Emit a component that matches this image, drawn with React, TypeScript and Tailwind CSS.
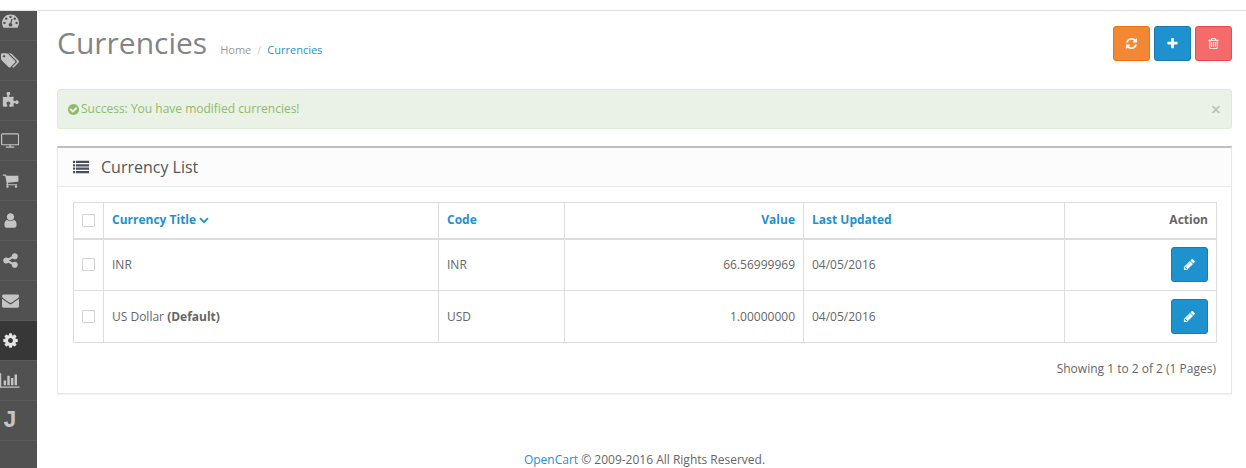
import type { ReactNode } from "react";

const ICONS = {
  dashboard:
    "M384 1152q0-53-37.5-90.5t-90.5-37.5-90.5 37.5-37.5 90.5 37.5 90.5 90.5 37.5 90.5-37.5 37.5-90.5zm192-448q0-53-37.5-90.5t-90.5-37.5-90.5 37.5-37.5 90.5 37.5 90.5 90.5 37.5 90.5-37.5 37.5-90.5zm428 481l101-382q6-26-7.5-48.5t-38.5-29.5-48 6.5-30 39.5l-101 382q-60 5-107 43.5t-63 98.5q-20 77 20 146t117 89 146-20 89-117q16-60-6-117t-72-91zm660-33q0-53-37.5-90.5t-90.5-37.5-90.5 37.5-37.5 90.5 37.5 90.5 90.5 37.5 90.5-37.5 37.5-90.5zm-640-640q0-53-37.5-90.5t-90.5-37.5-90.5 37.5-37.5 90.5 37.5 90.5 90.5 37.5 90.5-37.5 37.5-90.5zm448 192q0-53-37.5-90.5t-90.5-37.5-90.5 37.5-37.5 90.5 37.5 90.5 90.5 37.5 90.5-37.5 37.5-90.5zm320 448q0 261-141 483-19 29-54 29h-1402q-35 0-54-29-141-221-141-483 0-182 71-348t191-286 286-191 348-71 348 71 286 191 191 286 71 348z",
  tags: "M448 448q0-53-37.5-90.5t-90.5-37.5-90.5 37.5-37.5 90.5 37.5 90.5 90.5 37.5 90.5-37.5 37.5-90.5zm1067 576q0 53-37 90l-491 492q-39 37-91 37-53 0-90-37l-715-716q-38-37-64.5-101t-26.5-117v-416q0-52 38-90t90-38h416q53 0 117 26.5t102 64.5l715 714q37 39 37 91zm384 0q0 53-37 90l-491 492q-39 37-91 37-36 0-59-14t-53-45l470-470q37-37 37-90 0-52-37-91l-715-714q-38-38-102-64.5t-117-26.5h224q53 0 117 26.5t102 64.5l715 714q37 39 37 91z",
  puzzle:
    "M1755 1083q0 81-44.5 135t-123.5 54q-41 0-77.5-17.5t-59-38-56.5-38-71-17.5q-110 0-110 124 0 39 16 115t15 115v5q-22 0-33 1-34 3-97.5 11.5t-115.5 13.5-98 5q-61 0-103-26.5t-42-83.5q0-37 17.5-71t38-56.5 38-59 17.5-77.5q0-79-54-123.5t-135-44.5q-84 0-143 45.5t-59 127.5q0 43 15 83t33.5 64.5 33.5 53 15 50.5q0 45-46 89-37 35-117 35-95 0-245-24-9-2-27.5-4t-27.5-4l-13-2q-1 0-3-1-2 0-2-1v-1024q2 1 17.5 3.5t34 5 21.5 3.5q150 24 245 24 80 0 117-35 46-44 46-89 0-22-15-50.5t-33.5-53-33.5-64.5-15-83q0-82 59-127.5t144-45.5q80 0 134 44.5t54 123.5q0 41-17.5 77.5t-38 59-38 56.5-17.5 71q0 57 42 83.5t103 26.5q64 0 180-15t163-17v2q-1 2-3.5 17.5t-5 34-3.5 21.5q-24 150-24 245 0 80 35 117 44 46 89 46 22 0 50.5-15t53-33.5 64.5-33.5 83-15q82 0 127.5 59t45.5 143z",
  television:
    "M1792 1248v-960q0-13-9.5-22.5t-22.5-9.5h-1600q-13 0-22.5 9.5t-9.5 22.5v960q0 13 9.5 22.5t22.5 9.5h1600q13 0 22.5-9.5t9.5-22.5zm128-960v960q0 66-47 113t-113 47h-736v128h352q14 0 23 9t9 23v64q0 14-9 23t-23 9h-832q-14 0-23-9t-9-23v-64q0-14 9-23t23-9h352v-128h-736q-66 0-113-47t-47-113v-960q0-66 47-113t113-47h1600q66 0 113 47t47 113z",
  cart: "M704 1536q0 52-38 90t-90 38-90-38-38-90 38-90 90-38 90 38 38 90zm896 0q0 52-38 90t-90 38-90-38-38-90 38-90 90-38 90 38 38 90zm128-1088v512q0 24-16.5 42.5t-40.5 21.5l-1044 122q13 60 13 70 0 16-24 64h920q26 0 45 19t19 45-19 45-45 19h-1024q-26 0-45-19t-19-45q0-11 8-31.5t16-36 21.5-40 15.5-29.5l-177-823h-204q-26 0-45-19t-19-45 19-45 45-19h256q16 0 28.5 6.5t19.5 15.5 13 24.5 8 26 5.5 29.5 4.5 26h1201q26 0 45 19t19 45z",
  user: "M1536 1399q0 109-62.5 187t-150.5 78h-854q-88 0-150.5-78t-62.5-187q0-85 8.5-160.5t31.5-152 58.5-131 94-89 134.5-34.5q131 128 313 128t313-128q76 0 134.5 34.5t94 89 58.5 131 31.5 152 8.5 160.5zm-256-887q0 159-112.5 271.5t-271.5 112.5-271.5-112.5-112.5-271.5 112.5-271.5 271.5-112.5 271.5 112.5 112.5 271.5z",
  share:
    "M1344 1024q133 0 226.5 93.5t93.5 226.5-93.5 226.5-226.5 93.5-226.5-93.5-93.5-226.5q0-12 2-34l-360-180q-92 86-218 86-133 0-226.5-93.5t-93.5-226.5 93.5-226.5 226.5-93.5q126 0 218 86l360-180q-2-22-2-34 0-133 93.5-226.5t226.5-93.5 226.5 93.5 93.5 226.5-93.5 226.5-226.5 93.5q-126 0-218-86l-360 180q2 22 2 34t-2 34l360 180q92-86 218-86z",
  envelope:
    "M1792 710v794q0 66-47 113t-113 47h-1472q-66 0-113-47t-47-113v-794q44 49 101 87 362 246 497 345 57 42 92.5 65.5t94.5 48 110 24.5h2q51 0 110-24.5t94.5-48 92.5-65.5q170-123 498-345 57-39 100-87zm0-294q0 79-49 151t-122 123q-376 261-468 325-10 7-42.5 31t-54 38-52 32.5-57.5 27-50 9h-2q-23 0-50-9t-57.5-27-52-32.5-54-38-42.5-31q-91-64-262-182.5t-205-142.5q-62-42-117-115.5t-55-136.5q0-78 41.5-130t118.5-52h1472q65 0 112.5 47t47.5 113z",
  cog: "M1152 896q0-106-75-181t-181-75-181 75-75 181 75 181 181 75 181-75 75-181zm512-109v222q0 12-8 23t-20 13l-185 28q-19 54-39 91 35 50 107 138 10 12 10 25t-9 23q-27 37-99 108t-94 71q-12 0-26-9l-138-108q-44 23-91 38-16 136-29 186-7 28-36 28h-222q-14 0-24.5-8.5t-11.5-21.5l-28-184q-49-16-90-37l-141 107q-10 9-25 9-14 0-25-11-126-114-165-168-7-10-7-23 0-12 8-23 15-21 51-66.5t54-70.5q-27-50-41-99l-183-27q-13-2-21-12.5t-8-23.5v-222q0-12 8-23t19-13l186-28q14-46 39-92-40-57-107-138-10-12-10-24 0-10 9-23 26-36 98.5-107.5t94.5-71.5q13 0 26 10l138 107q44-23 91-38 16-136 29-186 7-28 36-28h222q14 0 24.5 8.5t11.5 21.5l28 184q49 16 90 37l142-107q9-9 24-9 13 0 25 10 129 119 165 170 7 8 7 22 0 12-8 23-15 21-51 66.5t-54 70.5q26 50 41 98l183 28q13 2 21 12.5t8 23.5z",
  chart:
    "M640 896v512h-256v-512h256zm384-512v1024h-256v-1024h256zm1024 1152v128h-2048v-1536h128v1408h1920zm-640-896v768h-256v-768h256zm384-384v1152h-256v-1152h256z",
  refresh:
    "M1639 1056q0 5-1 7-64 268-268 434.5t-478 166.5q-146 0-282.5-55t-243.5-157l-129 129q-19 19-45 19t-45-19-19-45v-448q0-26 19-45t45-19h448q26 0 45 19t19 45-19 45l-137 137q71 66 161 102t187 36q134 0 250-65t186-179q11-17 53-117 8-23 30-23h192q13 0 22.5 9.5t9.5 22.5zm25-800v448q0 26-19 45t-45 19h-448q-26 0-45-19t-19-45 19-45l138-138q-148-137-349-137-134 0-250 65t-186 179q-11 17-53 117-8 23-30 23h-199q-13 0-22.5-9.5t-9.5-22.5v-7q65-268 270-434.5t480-166.5q146 0 284 55.5t245 156.5l130-129q19-19 45-19t45 19 19 45z",
  plus: "M1600 736v192q0 40-28 68t-68 28h-416v416q0 40-28 68t-68 28h-192q-40 0-68-28t-28-68v-416h-416q-40 0-68-28t-28-68v-192q0-40 28-68t68-28h416v-416q0-40 28-68t68-28h192q40 0 68 28t28 68v416h416q40 0 68 28t28 68z",
  trash:
    "M704 736v576q0 14-9 23t-23 9h-64q-14 0-23-9t-9-23v-576q0-14 9-23t23-9h64q14 0 23 9t9 23zm256 0v576q0 14-9 23t-23 9h-64q-14 0-23-9t-9-23v-576q0-14 9-23t23-9h64q14 0 23 9t9 23zm256 0v576q0 14-9 23t-23 9h-64q-14 0-23-9t-9-23v-576q0-14 9-23t23-9h64q14 0 23 9t9 23zm128 724v-948h-896v948q0 22 7 40.5t14.5 27 10.5 8.5h832q3 0 10.5-8.5t14.5-27 7-40.5zm-672-1076h448l-48-117q-7-9-17-11h-317q-10 2-17 11zm928 32v64q0 14-9 23t-23 9h-96v948q0 83-47 143.5t-113 60.5h-832q-66 0-113-58.5t-47-141.5v-952h-96q-14 0-23-9t-9-23v-64q0-14 9-23t23-9h309l70-167q15-37 54-63t79-26h320q40 0 79 26t54 63l70 167h309q14 0 23 9t9 23z",
  check:
    "M1412 734q0-28-18-46l-91-90q-19-19-45-19t-45 19l-408 407-226-226q-19-19-45-19t-45 19l-91 90q-18 18-18 46 0 27 18 45l362 362q19 19 45 19 27 0 46-19l543-543q18-18 18-45zm252 162q0 209-103 385.5t-279.5 279.5-385.5 103-385.5-103-279.5-279.5-103-385.5 103-385.5 279.5-279.5 385.5-103 385.5 103 279.5 279.5 103 385.5z",
  pencil:
    "M491 1536l91-91-235-235-91 91v107h128v128h107zm523-928q0-22-22-22-10 0-17 7l-542 542q-7 7-7 17 0 22 22 22 10 0 17-7l542-542q7-7 7-17zm-54-192l416 416-832 832h-416v-416zm683 96q0 53-37 90l-166 166-416-416 166-165q36-38 90-38 53 0 91 38l235 234q37 39 37 91z",
  list: "M0 192h240v256h-240zM336 192h1456v256h-1456zM0 576h240v256h-240zM336 576h1456v256h-1456zM0 960h240v256h-240zM336 960h1456v256h-1456zM0 1344h240v256h-240zM336 1344h1456v256h-1456z",
};

type IconName = keyof typeof ICONS;

const Icon = ({
  name,
  width = 1792,
  className,
}: {
  name: IconName;
  width?: number;
  className: string;
}) => (
  <svg
    viewBox={`0 0 ${width} 1792`}
    fill="currentColor"
    aria-hidden="true"
    className={className}
  >
    <path d={ICONS[name]} />
  </svg>
);

const MENU: { label: string; icon: IconName; width?: number; active?: boolean }[] = [
  { label: "Dashboard", icon: "dashboard" },
  { label: "Catalog", icon: "tags", width: 1920 },
  { label: "Extensions", icon: "puzzle" },
  { label: "Design", icon: "television", width: 1920 },
  { label: "Sales", icon: "cart" },
  { label: "Customers", icon: "user" },
  { label: "Marketing", icon: "share" },
  { label: "Mail", icon: "envelope" },
  { label: "System", icon: "cog", active: true },
  { label: "Reports", icon: "chart", width: 2048 },
];

const CURRENCIES = [
  { title: "INR", code: "INR", value: "66.56999969", updated: "04/05/2016" },
  {
    title: "US Dollar",
    code: "USD",
    value: "1.00000000",
    updated: "04/05/2016",
    isDefault: true,
  },
];

const Sidebar = () => (
  <nav className="w-[37px] shrink-0 bg-[#515151] text-[#c4c4c4]">
    <ul className="-mt-[10px] [clip-path:inset(10px_0_0_0)]">
      {MENU.map((item) => (
        <li key={item.label} className="border-b border-[#5a5a5a]">
          <a
            href="#"
            aria-label={item.label}
            className={
              item.active
                ? "flex h-[39px] items-center bg-[#373737] text-[#e4e4e4]"
                : "flex h-[39px] items-center"
            }
          >
            <span className="flex w-5 justify-center">
              <Icon
                name={item.icon}
                width={item.width}
                className="h-[17px] w-auto shrink-0"
              />
            </span>
          </a>
        </li>
      ))}
      <li className="border-b border-[#5a5a5a]">
        <a
          href="#"
          className="flex h-[39px] items-center font-['Liberation_Mono',monospace] text-[24px] font-bold"
        >
          <span className="w-5 text-center">J</span>
        </a>
      </li>
    </ul>
  </nav>
);

const Button = ({
  label,
  color,
  children,
}: {
  label: string;
  color: string;
  children: ReactNode;
}) => (
  <button
    type="button"
    aria-label={label}
    className={`inline-flex h-[35px] w-[37px] items-center justify-center rounded-[3px] border text-white ${color}`}
  >
    {children}
  </button>
);

const BLUE = "border-[#197bb0] bg-[#1e91cf]";

const Checkbox = ({ label }: { label: string }) => (
  <input
    type="checkbox"
    aria-label={label}
    className="block size-[13px] appearance-none rounded-[1px] border border-[#d4d4d4] bg-white checked:bg-[#1e91cf]"
  />
);

const CurrencyTable = () => (
  <table className="w-full table-fixed border-collapse border border-[#dddddd] [&_td]:border [&_td]:border-[#dddddd] [&_td]:px-2 [&_th]:border [&_th]:border-b-2 [&_th]:border-[#dddddd] [&_th]:px-2">
    <colgroup>
      <col className="w-[30px]" />
      <col className="w-[335px]" />
      <col className="w-[126px]" />
      <col className="w-[239px]" />
      <col className="w-[261px]" />
      <col className="w-[152px]" />
    </colgroup>
    <thead>
      <tr className="h-9 text-left text-[#1e91cf]">
        <th>
          <Checkbox label="Select all" />
        </th>
        <th>
          <a href="#" className="inline-flex items-center gap-[3px]">
            Currency Title
            <svg
              viewBox="0 0 10 7"
              fill="none"
              stroke="currentColor"
              strokeWidth="1.8"
              className="h-[7px] w-[10px]"
              aria-hidden="true"
            >
              <path d="M1 1.2L5 5.2 9 1.2" />
            </svg>
          </a>
        </th>
        <th>
          <a href="#">Code</a>
        </th>
        <th className="text-right">
          <a href="#">Value</a>
        </th>
        <th>
          <a href="#">Last Updated</a>
        </th>
        <th className="text-right text-[#666666]">Action</th>
      </tr>
    </thead>
    <tbody>
      {CURRENCIES.map((currency) => (
        <tr key={currency.code} className="h-[52px]">
          <td>
            <Checkbox label={`Select ${currency.title}`} />
          </td>
          <td>
            {currency.title}
            {currency.isDefault && <b> (Default)</b>}
          </td>
          <td>{currency.code}</td>
          <td className="text-right">{currency.value}</td>
          <td>{currency.updated}</td>
          <td>
            <div className="flex justify-end">
              <Button label={`Edit ${currency.title}`} color={BLUE}>
                <Icon name="pencil" className="size-[13px]" />
              </Button>
            </div>
          </td>
        </tr>
      ))}
    </tbody>
  </table>
);

export default function App() {
  return (
    <div className="flex min-h-screen flex-col bg-white font-['Open_Sans',sans-serif] text-[12px] leading-[18px] text-[#666666]">
      <header className="h-[11px] border-b border-[#e2e2e2] bg-white" />
      <div className="flex flex-1">
        <Sidebar />
        <main className="flex min-w-0 flex-1 flex-col pr-[14px] pl-5">
          <div className="flex items-start justify-between pt-[15px]">
            <div className="flex items-baseline gap-[13px]">
              <h1 className="text-[30px] leading-[34px] text-[#848484]">
                Currencies
              </h1>
              <ol className="flex text-[11px] text-[#999999]">
                <li>
                  <a href="#">Home</a>
                </li>
                <li className="text-[#1e91cf] before:px-[6px] before:text-[#cccccc] before:content-['/']">
                  <a href="#">Currencies</a>
                </li>
              </ol>
            </div>
            <div className="flex gap-1">
              <Button label="Refresh" color="border-[#f3700d] bg-[#f38733]">
                <Icon name="refresh" className="size-[13px]" />
              </Button>
              <Button label="Add New" color={BLUE}>
                <Icon name="plus" className="size-[13px]" />
              </Button>
              <Button label="Delete" color="border-[#f24545] bg-[#f56b6b]">
                <Icon name="trash" className="size-[13px]" />
              </Button>
            </div>
          </div>

          <div
            role="alert"
            className="mt-7 flex h-10 items-center rounded-[3px] border border-[#dfebd5] bg-[#eaf1e6] pr-[10px] pl-[9px] text-[#8fbb6c]"
          >
            <Icon name="check" className="mr-px size-[13px]" />
            <span className="flex-1">
              Success: You have modified currencies!
            </span>
            <button
              type="button"
              aria-label="Close"
              className="text-[18px] font-semibold text-[#bbc1b8]"
            >
              ×
            </button>
          </div>

          <section className="mt-[17px] border border-t-2 border-[#e8e8e8] border-t-[#bfbfbf] shadow-[0_1px_1px_rgba(0,0,0,0.05)]">
            <div className="flex h-[39px] items-center gap-3 border-b border-[#e8e8e8] bg-[#fcfcfc] px-[15px] pb-px text-[#4c4d5a]">
              <Icon name="list" className="size-4" />
              <h2 className="text-[16px] text-[#555555]">Currency List</h2>
            </div>
            <div className="p-[15px]">
              <CurrencyTable />
              <p className="mt-[17px] text-right">
                Showing 1 to 2 of 2 (1 Pages)
              </p>
            </div>
          </section>

          <footer className="mt-[57px] text-center">
            <a href="#" className="text-[#1e91cf]">
              OpenCart
            </a>{" "}
            © 2009-2016 All Rights Reserved.
          </footer>
        </main>
      </div>
    </div>
  );
}
